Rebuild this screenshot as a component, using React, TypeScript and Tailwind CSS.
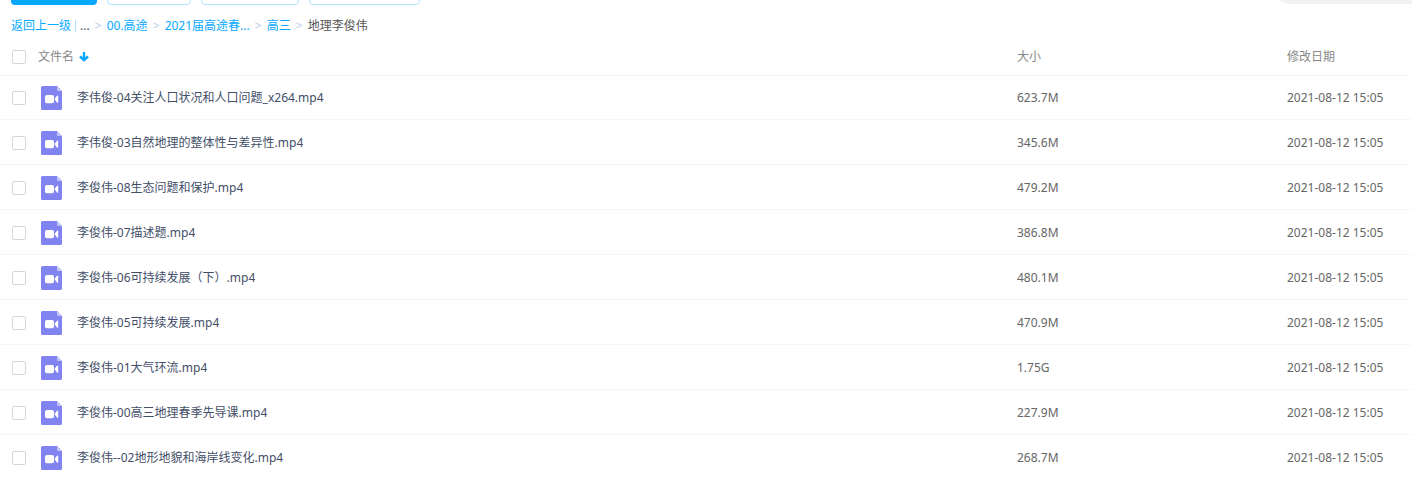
interface FileEntry {
  name: string;
  size: string;
  date: string;
}

const files: FileEntry[] = [
  { name: "李伟俊-04关注人口状况和人口问题_x264.mp4", size: "623.7M", date: "2021-08-12 15:05" },
  { name: "李伟俊-03自然地理的整体性与差异性.mp4", size: "345.6M", date: "2021-08-12 15:05" },
  { name: "李俊伟-08生态问题和保护.mp4", size: "479.2M", date: "2021-08-12 15:05" },
  { name: "李俊伟-07描述题.mp4", size: "386.8M", date: "2021-08-12 15:05" },
  { name: "李俊伟-06可持续发展（下）.mp4", size: "480.1M", date: "2021-08-12 15:05" },
  { name: "李俊伟-05可持续发展.mp4", size: "470.9M", date: "2021-08-12 15:05" },
  { name: "李俊伟-01大气环流.mp4", size: "1.75G", date: "2021-08-12 15:05" },
  { name: "李俊伟-00高三地理春季先导课.mp4", size: "227.9M", date: "2021-08-12 15:05" },
  { name: "李俊伟--02地形地貌和海岸线变化.mp4", size: "268.7M", date: "2021-08-12 15:05" },
];

const crumbs = ["00.高途", "2021届高途春...", "高三"];

function Checkbox({ label }: { label: string }) {
  return (
    <input
      type="checkbox"
      aria-label={label}
      className="block size-3.5 shrink-0 appearance-none rounded-xs border border-[#d4d7de] bg-white checked:border-[#06a7ff] checked:bg-[#06a7ff]"
    />
  );
}

function VideoIcon() {
  return (
    <svg viewBox="0 0 21 24" className="h-6 w-[21px] shrink-0" aria-hidden="true">
      <path d="M1.5 0H16l5 5v17.5a1.5 1.5 0 0 1-1.5 1.5h-18A1.5 1.5 0 0 1 0 22.5v-21A1.5 1.5 0 0 1 1.5 0Z" fill="#8183f1" />
      <path d="M16 0l5 5h-4a1 1 0 0 1-1-1Z" fill="#c3c4fa" />
      <rect x="4" y="9" width="9" height="8.2" rx="1.8" fill="#fff" />
      <path d="M13.4 13.1l2.4-3.2q1.4-1.200 1.400.4v5.600q0 1.600-1.400.4Z" fill="#fff" />
    </svg>
  );
}

function SortArrow() {
  return (
    <svg viewBox="0 0 10 10" className="size-2.5" aria-hidden="true">
      <path d="M5 0V8M1 4.5L5 8.2L9 4.500" fill="none" stroke="#06a7ff" strokeWidth="2.4" />
    </svg>
  );
}

function Toolbar() {
  return (
    <div className="flex h-[5px] items-end justify-between overflow-hidden pl-[11px]">
      <div className="flex gap-2.5">
        <button aria-label="上传" className="h-8 w-[86px] rounded-sm bg-[#06a7ff]" />
        <button aria-label="新建文件夹" className="h-8 w-[84px] rounded-sm border border-[#b4e5ff]" />
        <button aria-label="离线下载" className="h-8 w-[98px] rounded-sm border border-[#b4e5ff]" />
        <button aria-label="我的设备" className="h-8 w-[111px] rounded-sm border border-[#b4e5ff]" />
      </div>
      <input
        type="search"
        aria-label="搜索"
        className="mb-px h-8 w-[138px] rounded-l-full bg-[#f1f2f4] px-4 outline-none"
      />
    </div>
  );
}

function Separator() {
  return <span className="w-[17px] text-center text-[#b9cdec]">&gt;</span>;
}

function Breadcrumb() {
  return (
    <nav className="flex h-10 items-center pt-0.5 pl-[11px] text-[#424e67]">
      <a href="#back" className="text-[#09aaff]">返回上一级</a>
      <span className="mx-1 h-3 w-px bg-[#b4e0ff]" />
      <span>...</span>
      {crumbs.map((crumb) => (
        <span key={crumb} className="flex">
          <Separator />
          <a href="#folder" className="text-[#09aaff]">{crumb}</a>
        </span>
      ))}
      <Separator />
      <span className="text-[#555]">地理李俊伟</span>
    </nav>
  );
}

export default function App() {
  return (
    <div className="min-h-screen overflow-hidden bg-white font-['Noto_Sans','Noto_Sans_CJK_SC',sans-serif] text-xs">
      <Toolbar />
      <Breadcrumb />
      <table className="w-full table-fixed border-separate border-spacing-0 text-left">
        <colgroup>
          <col />
          <col className="w-[270px]" />
          <col className="w-[125px]" />
        </colgroup>
        <thead className="text-[#888]">
          <tr className="h-[30px] align-top leading-6">
            <th className="p-0 pl-3 font-normal">
              <div className="flex h-6 items-center gap-3">
                <Checkbox label="全选" />
                <button className="flex items-center gap-[5px]">
                  文件名
                  <SortArrow />
                </button>
              </div>
            </th>
            <th className="p-0 font-normal">大小</th>
            <th className="p-0 font-normal">修改日期</th>
          </tr>
        </thead>
        <tbody className="text-[#666]">
          {files.map((file) => (
            <tr key={file.name} className="group h-[45px]">
              <td className="border-b border-[#f2f6fd] p-0 pt-px pl-3 group-first:border-t group-first:pt-0">
                <div className="flex items-center">
                  <Checkbox label={file.name} />
                  <span className="flex items-center gap-[15px] pl-[15px]">
                    <VideoIcon />
                    <a href="#file" className="truncate text-[#424e67]">{file.name}</a>
                  </span>
                </div>
              </td>
              <td className="border-b border-[#f2f6fd] p-0 pt-px group-first:border-t group-first:pt-0">{file.size}</td>
              <td className="border-b border-[#f2f6fd] p-0 pt-px group-first:border-t group-first:pt-0">{file.date}</td>
            </tr>
          ))}
        </tbody>
      </table>
    </div>
  );
}
